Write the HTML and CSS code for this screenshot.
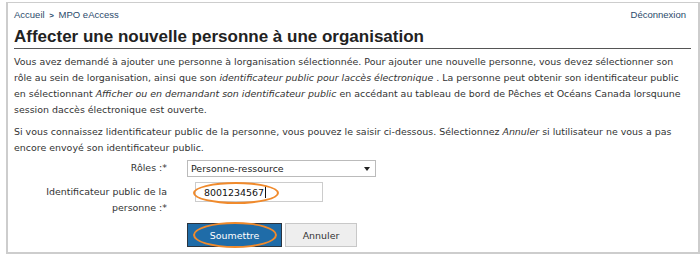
FILE: index.html
```html
<!DOCTYPE html>
<html lang="fr">
<head>
<meta charset="utf-8">
<link rel="stylesheet" href="styles.css">
</head>
<body>
<div class="frame">
  <div class="topbar">
    <div class="crumbs"><a href="#">Accueil</a> <span class="sep">&gt;</span> <a href="#">MPO eAccess</a></div>
    <a class="logout" href="#">Déconnexion</a>
  </div>
  <h1 class="title">Affecter une nouvelle personne à une organisation</h1>
  <p class="para">Vous avez demandé à ajouter une personne à lorganisation sélectionnée. Pour ajouter une nouvelle personne, vous devez sélectionner son rôle au sein de lorganisation, ainsi que son <em>identificateur public pour laccès électronique</em> . La personne peut obtenir son identificateur public en sélectionnant <em>Afficher ou en demandant son identificateur public</em> en accédant au tableau de bord de Pêches et Océans Canada lorsquune session daccès électronique est ouverte.</p>
  <p class="para">Si vous connaissez lidentificateur public de la personne, vous pouvez le saisir ci-dessous. Sélectionnez <em>Annuler</em> si lutilisateur ne vous a pas encore envoyé son identificateur public.</p>
  <div class="form">
    <label class="lbl lbl-role">Rôles :*</label>
    <div class="field">
      <div class="select"><span>Personne-ressource</span><span class="caret"></span></div>
    </div>
    <label class="lbl lbl-id">Identificateur public de la personne :*</label>
    <div class="field">
      <div class="input"><span class="val">8001234567</span><span class="cursor"></span>
        <span class="ring ring-input"></span>
      </div>
    </div>
    <div></div>
    <div class="buttons">
      <button class="btn btn-primary">Soumettre<span class="ring ring-btn"></span></button>
      <button class="btn btn-secondary">Annuler</button>
    </div>
  </div>
</div>
</body>
</html>
```
FILE: styles.css
```css
html, body { margin: 0; padding: 0; background: #fff; }
body { width: 700px; height: 261px; overflow: hidden; }
.frame {
  margin: 2px 0 0 6px;
  width: 694px;
  height: 252px;
  border: 2px solid #cdcdcd;
  border-top-width: 1px;
  padding: 0 7px 0 6px;
  box-sizing: border-box;
  font-family: "DejaVu Sans", Verdana, sans-serif;
  color: #333;
}
.topbar {
  display: flex;
  justify-content: space-between;
  font-family: "Liberation Sans", Arial, sans-serif;
  font-size: 9.5px;
  padding-top: 5px;
  height: 13px;
  line-height: 13px;
}
.topbar a { color: #2b4a6b; text-decoration: none; }
.crumbs .sep { font-size: 8px; font-weight: bold; color: #2b4a6b; margin: 0 2px; }
.logout { margin-right: 5px; }
.title {
  margin: 6px 0 0 0;
  font-family: "Liberation Sans", Arial, sans-serif;
  font-size: 17px;
  font-weight: bold;
  color: #222;
  line-height: 20px;
  padding-bottom: 1px;
  border-bottom: 1px solid #555;
}
.para {
  margin: 5px 0 0 0;
  font-size: 9.45px;
  line-height: 16px;
}
.para + .para { margin-top: 6px; }
.form {
  display: grid;
  grid-template-columns: 153px 1fr;
  column-gap: 20px;
  row-gap: 5px;
  margin-top: 4px;
  font-size: 9.45px;
}
.lbl { text-align: right; line-height: 16px; }
.lbl-id { width: 124px; justify-self: end; padding-top: 2px; }
.field { position: relative; }
.select {
  width: 189px;
  height: 17px;
  box-sizing: border-box;
  border: 1px solid #bbb;
  display: flex;
  align-items: center;
  justify-content: space-between;
  padding: 0 5px 0 3px;
  color: #222;
}
.caret {
  width: 0; height: 0;
  border-left: 3px solid transparent;
  border-right: 3px solid transparent;
  border-top: 4px solid #222;
}
.input {
  position: relative;
  margin-left: 8px;
  width: 128px;
  height: 20px;
  box-sizing: border-box;
  border: 1px solid #ccc;
  display: flex;
  align-items: center;
  padding-left: 8px;
  color: #111;
}
.cursor { width: 1px; height: 12px; background: #111; margin-left: 1px; }
.ring {
  position: absolute;
  box-sizing: border-box;
  border: 2px solid #f08a2c;
  border-radius: 50%;
  pointer-events: none;
}
.ring-input { left: -3px; top: -1px; width: 86px; height: 22px; }
.buttons { display: flex; gap: 3px; margin-top: 2px; }
.btn {
  position: relative;
  height: 24px;
  font-family: "DejaVu Sans", Verdana, sans-serif;
  font-size: 9.45px;
  box-sizing: border-box;
  padding: 0;
}
.btn-primary {
  width: 95px;
  background: #1f6ca8;
  color: #fff;
  border: 1px solid #2a3440;
}
.btn-secondary {
  width: 72px;
  background: #eeeeee;
  color: #333;
  border: 1px solid #c8c8c8;
}
.ring-btn { left: 5px; top: -2px; width: 84px; height: 26px; }
```
